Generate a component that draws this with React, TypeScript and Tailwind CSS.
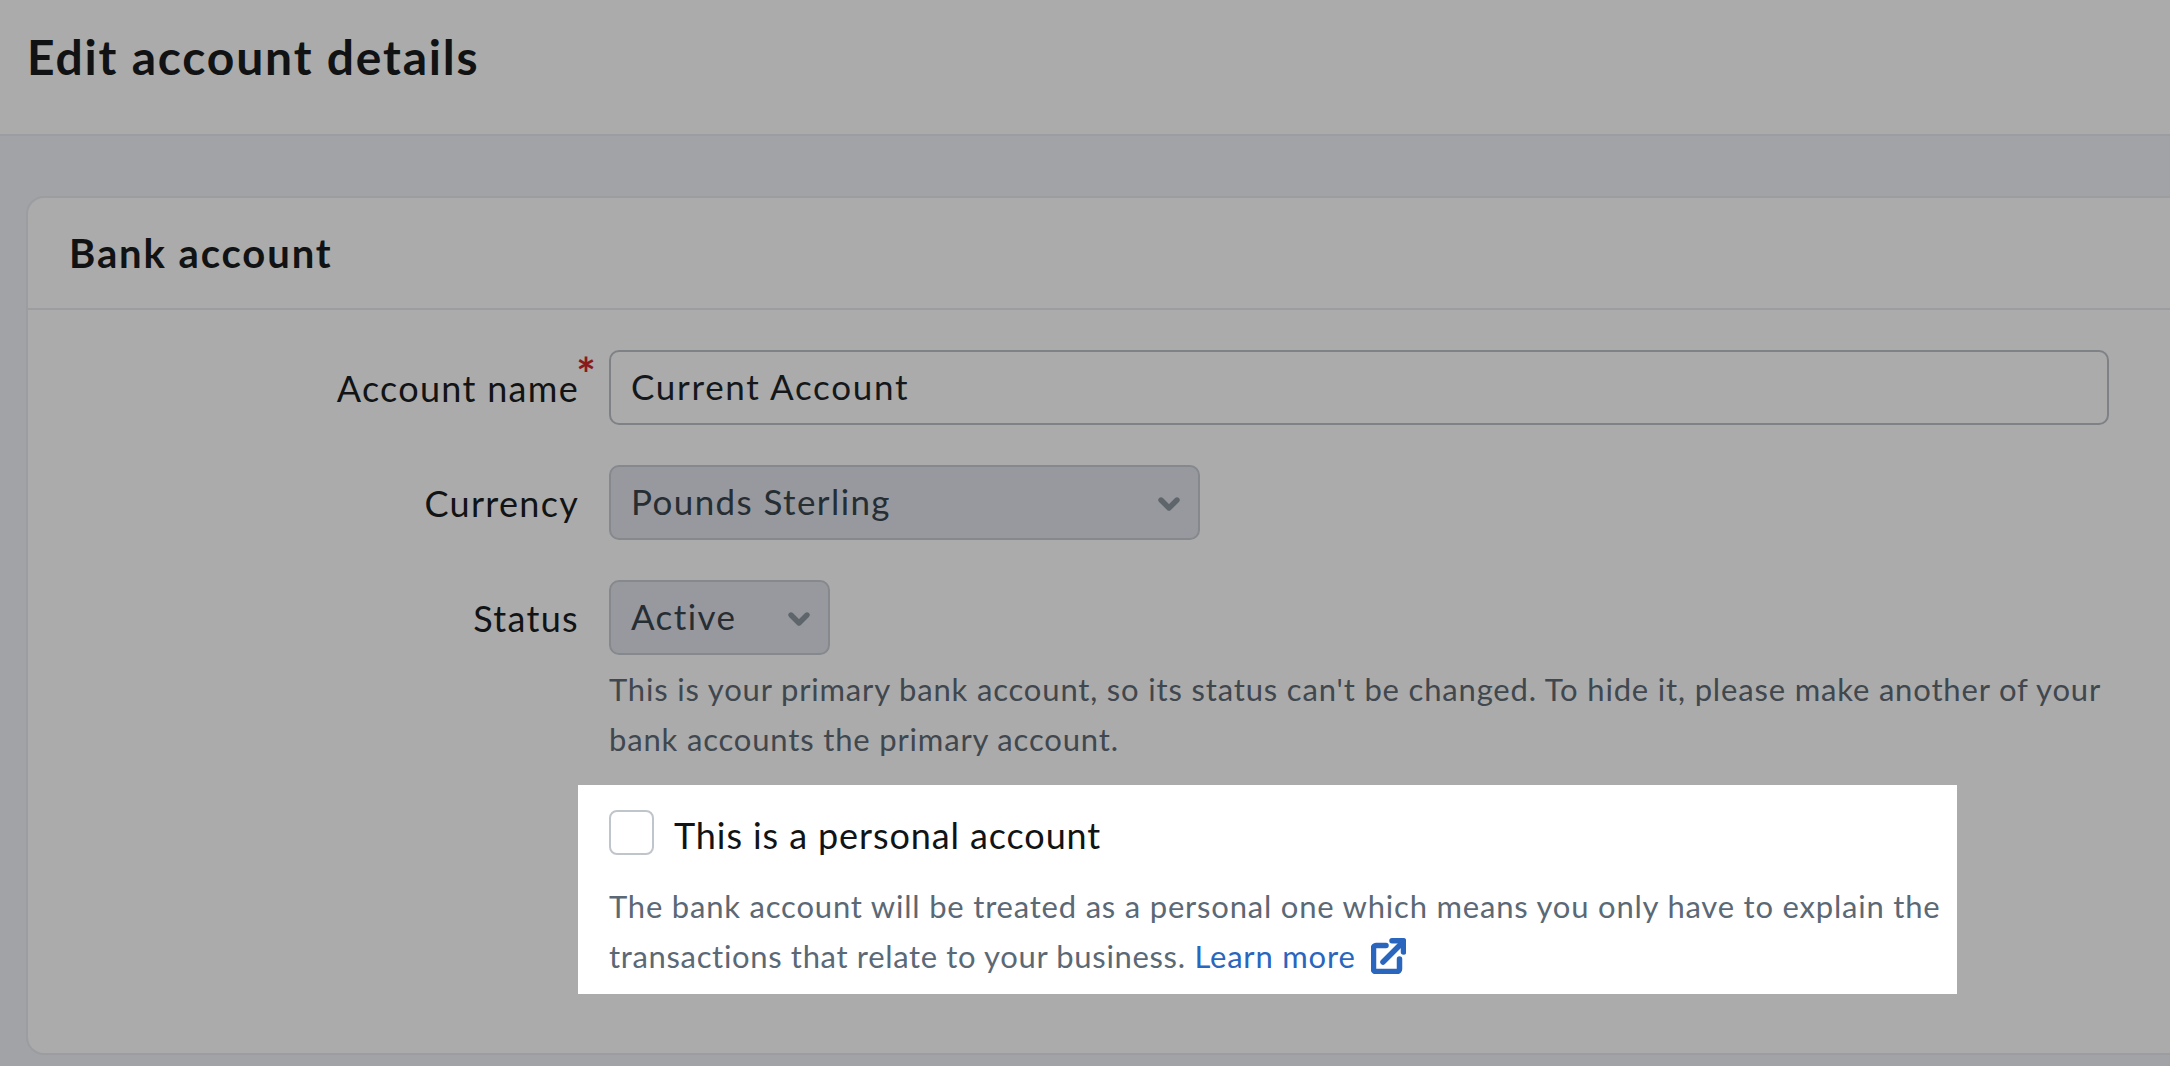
import { ChevronDown } from "lucide-react";

const font = "font-['Lato','Noto_Sans',sans-serif]";

function ExternalIcon() {
  return (
    <svg viewBox="0 0 35 36" className="ml-[15px] inline-block h-[36px] w-[35px] align-[-6px]" fill="none" stroke="#2a66bd" strokeWidth="5.5" strokeLinecap="round" strokeLinejoin="round">
      <path d="M15 7.500H5a2.500 2.500 0 0 0-2.500 2.500v21.500a2 2 0 0 0 2 2h21.500a2.500 2.500 0 0 0 2.500-2.500V21" />
      <path d="M12 24 31 5" />
      <path d="M21 2.800h11.500V14" />
    </svg>
  );
}

function Label({ children, required }: { children: string; required?: boolean }) {
  return (
    <label className="relative block w-[551px] pt-[13px] text-right text-[36px] leading-[50px] tracking-[1.3px] text-[#111315]">
      {children}
      {required && (
        <span className="absolute right-[-18px] top-[4px] text-[46px] font-bold leading-[40px] text-[#8a1a1a]">*</span>
      )}
    </label>
  );
}

function Select({ value, className }: { value: string; className: string }) {
  return (
    <div className={`relative flex h-[75px] items-center rounded-[10px] border-2 border-[#85898d] bg-[#97999e] pb-[2px] pl-[20px] text-[35px] tracking-[1.4px] text-[#262d33] ${className}`}>
      {value}
      <ChevronDown className="absolute right-[13px] top-[21px] h-[32px] w-[32px] text-[#5e666c]" strokeWidth={4} />
    </div>
  );
}

export default function App() {
  return (
    <div className={`${font} h-[1066px] overflow-hidden bg-[#a1a3a7]`}>
      <header className="flex h-[136px] items-center border-b-2 border-[#9b9da2] bg-[#ababab]">
        <h1 className="pb-[20px] pl-[27px] text-[48px] font-bold leading-[56px] tracking-[1.8px] text-[#111213]">Edit account details</h1>
      </header>
      <main className="pl-[26px] pt-[60px]">
        <section className="h-[859px] w-[2300px] rounded-[18px] border-2 border-[#9b9da1] bg-[#ababab]">
          <div className="flex h-[112px] items-center border-b-2 border-[#9b9da1] pl-[41px]">
            <h2 className="text-[40px] font-bold leading-[44px] tracking-[1.9px] text-[#111213]">Bank account</h2>
          </div>
          <div className="pt-[40px]">
            <div className="flex gap-[30px]">
              <Label required>Account name</Label>
              <input
                readOnly
                value="Current Account"
                className="h-[75px] w-[1500px] rounded-[10px] border-2 border-[#7e8286] bg-transparent px-[20px] pb-[3px] text-[35px] tracking-[1.7px] text-[#15181b]"
              />
            </div>
            <div className="mt-[40px] flex gap-[30px]">
              <Label>Currency</Label>
              <Select value="Pounds Sterling" className="w-[591px]" />
            </div>
            <div className="mt-[40px] flex gap-[30px]">
              <Label>Status</Label>
              <Select value="Active" className="w-[221px]" />
            </div>
            <p className="ml-[581px] mt-[9px] w-[1510px] text-[31px] leading-[50px] tracking-[0.83px] text-[#40474e]">
              This is your primary bank account, so its status can't be changed. To hide it, please make another of your bank accounts the primary account.
            </p>
            <div className="ml-[550px] mt-[21px] h-[209px] w-[1379px] bg-white pl-[31px] pt-[25px]">
              <div className="flex items-start gap-[20px]">
                <div className="h-[45px] w-[45px] rounded-[8px] border-2 border-[#c0c5cc]" />
                <span className="text-[36px] leading-[50px] tracking-[0.9px] text-[#111315]">This is a personal account</span>
              </div>
              <p className="mt-[21px] w-[1340px] text-[31px] leading-[50px] tracking-[0.8px] text-[#5b6875]">
                The bank account will be treated as a personal one which means you only have to explain the{" "}
                <span className="tracking-[0.66px]">transactions that relate to your business.</span>{" "}
                <a className="text-[#2a66bd]">Learn more<ExternalIcon /></a>
              </p>
            </div>
          </div>
        </section>
      </main>
    </div>
  );
}
